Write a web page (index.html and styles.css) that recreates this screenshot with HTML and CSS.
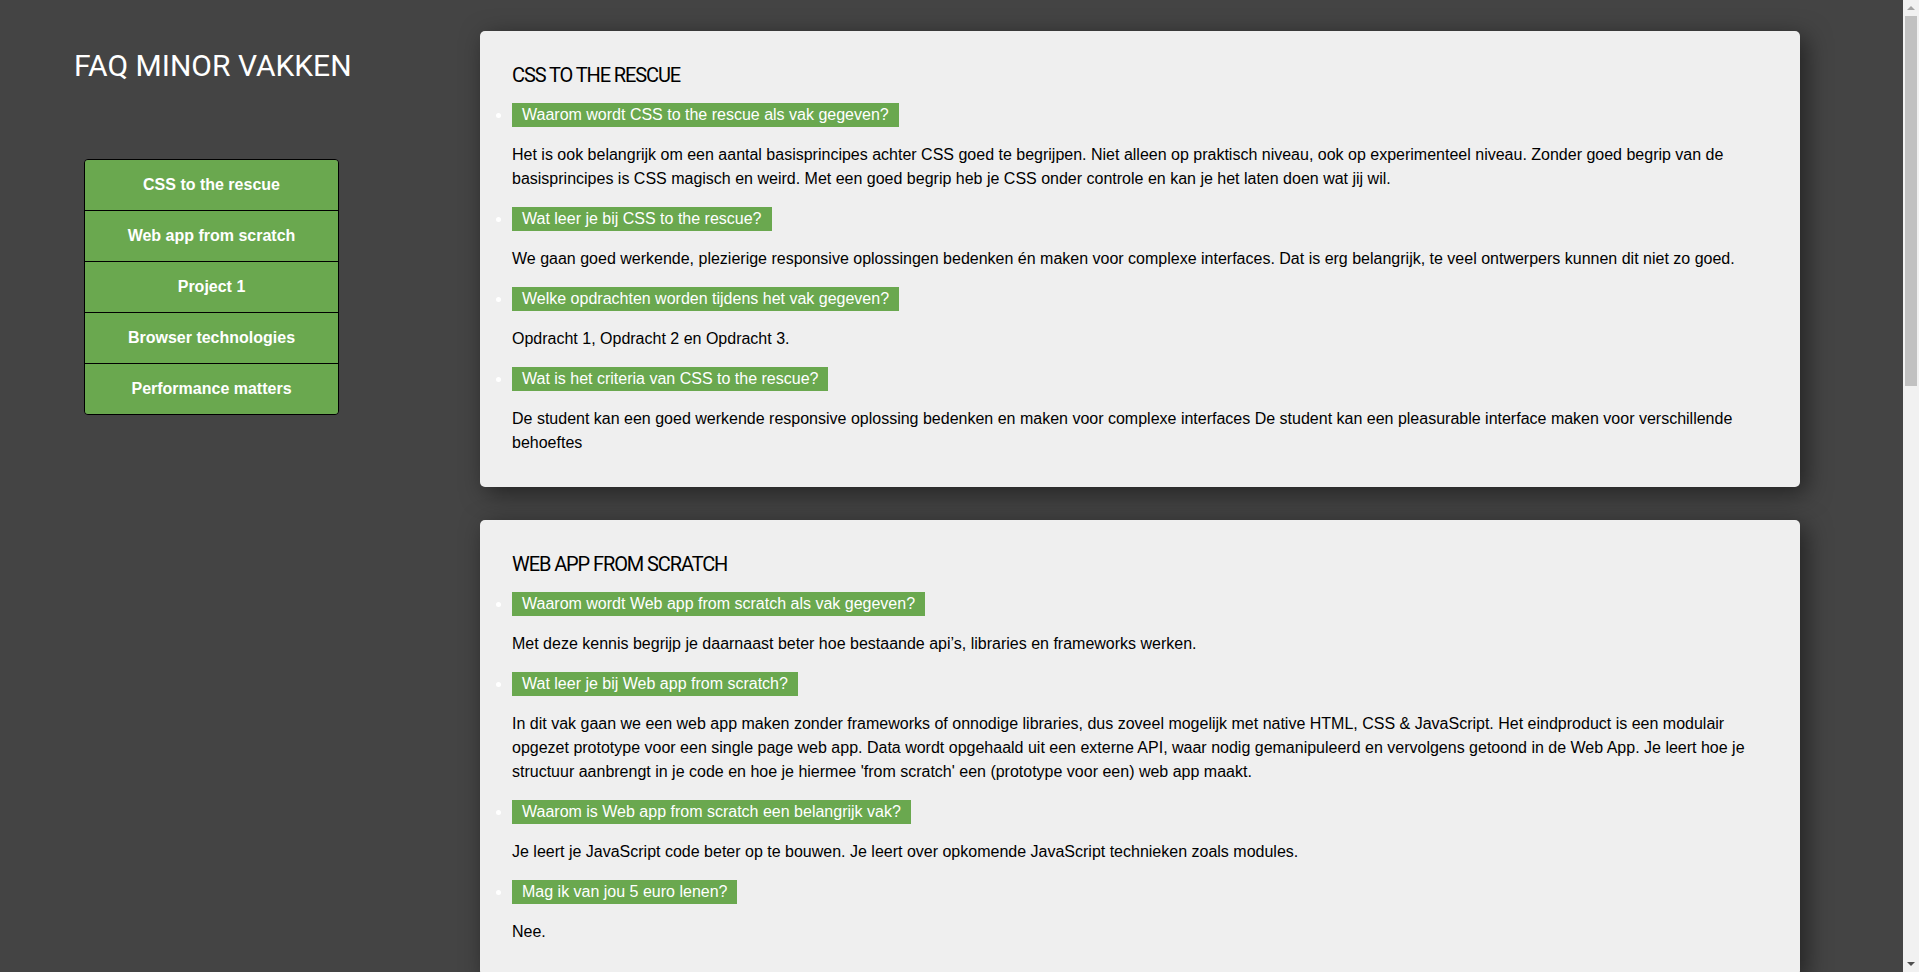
FILE: index.html
```html
<!DOCTYPE html>
<html lang="nl">
<head>
<meta charset="utf-8">
<title>FAQ Minor Vakken</title>
<link rel="stylesheet" href="styles.css">
</head>
<body>
<div class="page">
  <aside class="sidebar">
    <h1 class="site-title">FAQ MINOR VAKKEN</h1>
    <nav class="nav">
      <a class="nav-item" href="#css">CSS to the rescue</a>
      <a class="nav-item" href="#wafs">Web app from scratch</a>
      <a class="nav-item" href="#project1">Project 1</a>
      <a class="nav-item" href="#browser">Browser technologies</a>
      <a class="nav-item" href="#performance">Performance matters</a>
    </nav>
  </aside>
  <main class="content">
    <section class="card" id="css">
      <h2 class="card-title">CSS TO THE RESCUE</h2>
      <ul class="faq">
        <li class="faq-item">
          <span class="question">Waarom wordt CSS to the rescue als vak gegeven?</span>
          <p class="answer">Het is ook belangrijk om een aantal basisprincipes achter CSS goed te begrijpen. Niet alleen op praktisch niveau, ook op experimenteel niveau. Zonder goed begrip van de basisprincipes is CSS magisch en weird. Met een goed begrip heb je CSS onder controle en kan je het laten doen wat jij wil.</p>
        </li>
        <li class="faq-item">
          <span class="question">Wat leer je bij CSS to the rescue?</span>
          <p class="answer">We gaan goed werkende, plezierige responsive oplossingen bedenken én maken voor complexe interfaces. Dat is erg belangrijk, te veel ontwerpers kunnen dit niet zo goed.</p>
        </li>
        <li class="faq-item">
          <span class="question">Welke opdrachten worden tijdens het vak gegeven?</span>
          <p class="answer">Opdracht 1, Opdracht 2 en Opdracht 3.</p>
        </li>
        <li class="faq-item">
          <span class="question">Wat is het criteria van CSS to the rescue?</span>
          <p class="answer">De student kan een goed werkende responsive oplossing bedenken en maken voor complexe interfaces De student kan een pleasurable interface maken voor verschillende behoeftes</p>
        </li>
      </ul>
    </section>

    <section class="card" id="wafs">
      <h2 class="card-title">WEB APP FROM SCRATCH</h2>
      <ul class="faq">
        <li class="faq-item">
          <span class="question">Waarom wordt Web app from scratch als vak gegeven?</span>
          <p class="answer">Met deze kennis begrijp je daarnaast beter hoe bestaande api’s, libraries en frameworks werken.</p>
        </li>
        <li class="faq-item">
          <span class="question">Wat leer je bij Web app from scratch?</span>
          <p class="answer">In dit vak gaan we een web app maken zonder frameworks of onnodige libraries, dus zoveel mogelijk met native HTML, CSS &amp; JavaScript. Het eindproduct is een modulair opgezet prototype voor een single page web app. Data wordt opgehaald uit een externe API, waar nodig gemanipuleerd en vervolgens getoond in de Web App. Je leert hoe je structuur aanbrengt in je code en hoe je hiermee 'from scratch' een (prototype voor een) web app maakt.</p>
        </li>
        <li class="faq-item">
          <span class="question">Waarom is Web app from scratch een belangrijk vak?</span>
          <p class="answer">Je leert je JavaScript code beter op te bouwen. Je leert over opkomende JavaScript technieken zoals modules.</p>
        </li>
        <li class="faq-item">
          <span class="question">Mag ik van jou 5 euro lenen?</span>
          <p class="answer">Nee.</p>
        </li>
      </ul>
    </section>

    <section class="card" id="project1">
      <h2 class="card-title">PROJECT 1</h2>
      <ul class="faq">
        <li class="faq-item">
          <span class="question">Waarom wordt Project 1 als vak gegeven?</span>
          <p class="answer">In Project 1 pas je de kennis uit de eerste vakken toe in een echte opdracht voor een echte opdrachtgever.</p>
        </li>
        <li class="faq-item">
          <span class="question">Wat leer je bij Project 1?</span>
          <p class="answer">Je leert samenwerken in een team, werken met een opdrachtgever en een werkend prototype opleveren binnen een korte tijd.</p>
        </li>
        <li class="faq-item">
          <span class="question">Hoe lang duurt Project 1?</span>
          <p class="answer">Project 1 duurt drie weken.</p>
        </li>
        <li class="faq-item">
          <span class="question">Wat is het criteria van Project 1?</span>
          <p class="answer">De student kan de geleerde technieken toepassen in een project en kan zijn keuzes onderbouwen tegenover de opdrachtgever.</p>
        </li>
      </ul>
    </section>

    <section class="card" id="browser">
      <h2 class="card-title">BROWSER TECHNOLOGIES</h2>
      <ul class="faq">
        <li class="faq-item">
          <span class="question">Waarom wordt Browser technologies als vak gegeven?</span>
          <p class="answer">Niet iedereen gebruikt dezelfde browser of hetzelfde apparaat. Je leert hoe je websites maakt die voor iedereen werken.</p>
        </li>
        <li class="faq-item">
          <span class="question">Wat leer je bij Browser technologies?</span>
          <p class="answer">Je leert over progressive enhancement, feature detection en fallbacks, zodat je website robuust en toegankelijk is.</p>
        </li>
        <li class="faq-item">
          <span class="question">Welke opdrachten worden tijdens het vak gegeven?</span>
          <p class="answer">Opdracht 1, Opdracht 2 en Opdracht 3.</p>
        </li>
        <li class="faq-item">
          <span class="question">Wat is het criteria van Browser technologies?</span>
          <p class="answer">De student begrijpt hoe browsers werken en kan een website maken die in verschillende browsers en op verschillende apparaten werkt.</p>
        </li>
      </ul>
    </section>

    <section class="card" id="performance">
      <h2 class="card-title">PERFORMANCE MATTERS</h2>
      <ul class="faq">
        <li class="faq-item">
          <span class="question">Waarom wordt Performance matters als vak gegeven?</span>
          <p class="answer">Een snelle website zorgt voor een betere gebruikerservaring. Gebruikers haken af als een website te langzaam laadt.</p>
        </li>
        <li class="faq-item">
          <span class="question">Wat leer je bij Performance matters?</span>
          <p class="answer">Je leert hoe je de performance van een website meet en verbetert, zowel aan de server kant als aan de client kant.</p>
        </li>
        <li class="faq-item">
          <span class="question">Welke opdrachten worden tijdens het vak gegeven?</span>
          <p class="answer">Opdracht 1 en Opdracht 2.</p>
        </li>
        <li class="faq-item">
          <span class="question">Wat is het criteria van Performance matters?</span>
          <p class="answer">De student kan de performance van een website analyseren en verbeteren.</p>
        </li>
      </ul>
    </section>
  </main>
</div>
<div class="scrollbar" aria-hidden="true">
  <div class="scroll-btn scroll-up"><span class="arrow arrow-up"></span></div>
  <div class="scroll-track"><div class="scroll-thumb"></div></div>
  <div class="scroll-btn scroll-down"><span class="arrow arrow-down"></span></div>
</div>
</body>
</html>
```

FILE: styles.css
```css
html, body {
  margin: 0;
  padding: 0;
}

body {
  background: #444444;
  font-family: "Liberation Sans", Arial, sans-serif;
  font-size: 16px;
  color: #000;
}

.page {
  display: flex;
  align-items: flex-start;
}

.sidebar {
  width: 480px;
  flex: none;
  padding: 48px 0 0 74px;
  box-sizing: border-box;
}

.site-title {
  margin: 0;
  font-family: Roboto, "Noto Sans", sans-serif;
  font-weight: 400;
  font-size: 30px;
  line-height: 36px;
  letter-spacing: 0;
  color: #fff;
}

.nav {
  margin: 75px 0 0 10px;
  width: 255px;
  box-sizing: border-box;
  border: 1px solid #000;
  border-radius: 4px;
  overflow: hidden;
  display: flex;
  flex-direction: column;
}

.nav-item {
  display: block;
  height: 50px;
  line-height: 50px;
  background: #6aa84f;
  color: #fff;
  font-weight: bold;
  font-size: 16px;
  text-align: center;
  text-decoration: none;
  border-bottom: 1px solid #000;
}

.nav-item:last-child {
  border-bottom: none;
}

.content {
  width: 1320px;
  flex: none;
  padding-top: 31px;
  display: flex;
  flex-direction: column;
  gap: 33px;
}

.card {
  background: #efefef;
  border-radius: 5px;
  padding: 32px 32px 16px 32px;
  box-shadow: 6px 6px 24px rgba(0, 0, 0, 0.5);
}

.card-title {
  margin: 0 0 16px 0;
  font-family: Roboto, "Noto Sans", sans-serif;
  font-weight: 400;
  font-size: 20px;
  line-height: 24px;
  letter-spacing: -1.1px;
  color: #000;
}

.faq {
  margin: 0;
  padding: 0;
  list-style: disc outside;
}

.faq-item {
  color: #fff;
}

.question {
  display: block;
  width: max-content;
  background: #6aa84f;
  color: #fff;
  padding: 3px 10px;
  line-height: 18px;
}

.answer {
  margin: 16px 0;
  line-height: 24px;
  color: #000;
}

/* window scrollbar as in the screenshot */
.scrollbar {
  position: fixed;
  top: 0;
  right: 0;
  bottom: 0;
  width: 16px;
  background: #f1f1f1;
  display: flex;
  flex-direction: column;
}

.scroll-btn {
  height: 16px;
  flex: none;
  display: flex;
  align-items: center;
  justify-content: center;
}

.scroll-track {
  flex: 1;
  padding: 0 2px;
}

.scroll-thumb {
  height: 370px;
  background: #c1c1c1;
}

.arrow {
  width: 0;
  height: 0;
  border-left: 4px solid transparent;
  border-right: 4px solid transparent;
}

.arrow-up {
  border-bottom: 4px solid #a3a3a3;
}

.arrow-down {
  border-top: 4px solid #505050;
}
```
